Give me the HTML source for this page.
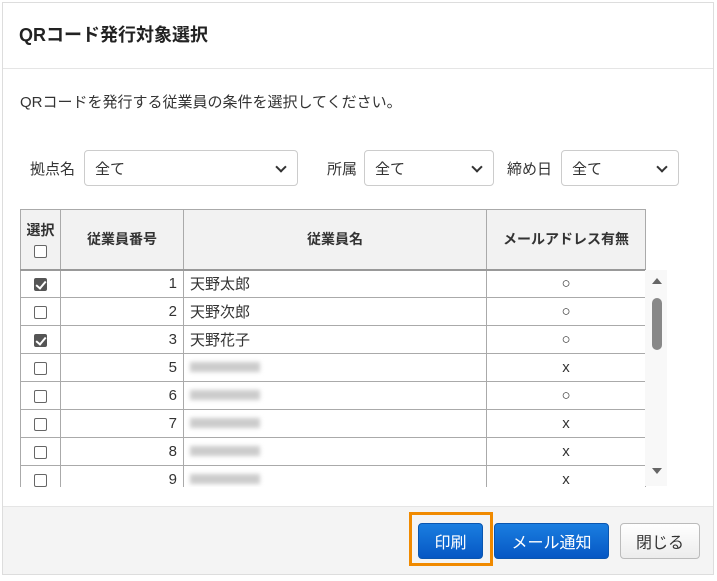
<!DOCTYPE html>
<html><head><meta charset="utf-8"><style>
*{box-sizing:border-box;margin:0;padding:0}
body{width:717px;height:581px;background:#fff;font-family:"Liberation Sans","Noto Sans CJK JP",sans-serif;color:#333;position:relative;overflow:hidden}
.frame{position:absolute;left:2px;top:2px;width:712px;height:573px;border:1px solid #ddd}
.title{position:absolute;left:19px;top:21px;font-size:18px;font-weight:bold;color:#222}
.sep{position:absolute;left:3px;top:68px;width:710px;height:1px;background:#e5e5e5}
.desc{position:absolute;left:20px;top:91px;font-size:15px}
.lbl{position:absolute;top:158px;font-size:15px}
.sel{position:absolute;top:150px;height:36px;border:1px solid #ccc;border-radius:4px;font-size:15px;padding:7px 10px}
.sel:after{content:"";position:absolute;right:12px;top:12px;width:6px;height:6px;border-right:2px solid #333;border-bottom:2px solid #333;transform:rotate(45deg)}
table{position:absolute;left:20px;top:209px;border-collapse:collapse;font-size:15px}
td,th{border:1px solid #aaa;height:28px;padding:0 6px}
th{background:#f2f2f2;height:60px;font-size:14px;font-weight:bold;border-bottom:2px solid #999}
.cb{width:13px;height:13px;border:1px solid #666;border-radius:2px;display:inline-block;vertical-align:middle;background:#fff}
.ck{background:#555;border-color:#555;position:relative}
.ck:after{content:"";position:absolute;left:3px;top:0px;width:4px;height:8px;border-right:2px solid #fff;border-bottom:2px solid #fff;transform:rotate(40deg)}
.blur{display:inline-block;width:70px;height:10px;background:#ccc;filter:blur(2px)}
.clip{position:absolute;left:0;top:0;width:717px;height:487px;overflow:hidden}
.footer{position:absolute;left:3px;top:506px;width:710px;height:68px;background:#f4f4f4;border-top:1px solid #e5e5e5}
.btn{position:absolute;top:523px;height:36px;border-radius:4px;font-size:16px;display:flex;align-items:center;justify-content:center}
.blue{background:linear-gradient(#1a7ee0,#0657c4);color:#fff;border:1px solid #0a56b0}
</style></head><body>
<div class="frame"></div>
<div class="title">QRコード発行対象選択</div>
<div class="sep"></div>
<div class="desc">QRコードを発行する従業員の条件を選択してください。</div>
<div class="lbl" style="left:30px">拠点名</div>
<div class="sel" style="left:84px;width:214px">全て</div>
<div class="lbl" style="left:327px">所属</div>
<div class="sel" style="left:364px;width:130px">全て</div>
<div class="lbl" style="left:507px">締め日</div>
<div class="sel" style="left:561px;width:118px">全て</div>
<div class="clip">
<table>
<tr><th style="width:40px;padding:0">選択<br><span class="cb" style="margin-top:4px"></span></th><th style="width:123px">従業員番号</th><th style="width:303px">従業員名</th><th style="width:159px">メールアドレス有無</th></tr>
<tr><td align=center><span class="cb ck"></span></td><td align=right>1</td><td>天野太郎</td><td align=center>○</td></tr>
<tr><td align=center><span class="cb"></span></td><td align=right>2</td><td>天野次郎</td><td align=center>○</td></tr>
<tr><td align=center><span class="cb ck"></span></td><td align=right>3</td><td>天野花子</td><td align=center>○</td></tr>
<tr><td align=center><span class="cb"></span></td><td align=right>5</td><td><span class="blur"></span></td><td align=center>x</td></tr>
<tr><td align=center><span class="cb"></span></td><td align=right>6</td><td><span class="blur"></span></td><td align=center>○</td></tr>
<tr><td align=center><span class="cb"></span></td><td align=right>7</td><td><span class="blur"></span></td><td align=center>x</td></tr>
<tr><td align=center><span class="cb"></span></td><td align=right>8</td><td><span class="blur"></span></td><td align=center>x</td></tr>
<tr><td align=center><span class="cb"></span></td><td align=right>9</td><td><span class="blur"></span></td><td align=center>x</td></tr>
</table>
</div>
<div style="position:absolute;left:645px;top:270px;width:22px;height:216px;background:#f8f8f8"></div>
<div style="position:absolute;left:652px;top:278px;border:5px solid transparent;border-bottom:6px solid #666;border-top:0"></div>
<div style="position:absolute;left:652px;top:298px;width:10px;height:52px;background:#888;border-radius:5px"></div>
<div style="position:absolute;left:652px;top:468px;border:5px solid transparent;border-top:6px solid #666;border-bottom:0"></div>
<div class="footer"></div>
<div style="position:absolute;left:409px;top:512px;width:84px;height:54px;border:3px solid #f08a00"></div>
<div class="btn blue" style="left:418px;width:65px">印刷</div>
<div class="btn blue" style="left:494px;width:115px">メール通知</div>
<div class="btn" style="left:620px;width:80px;background:linear-gradient(#fff,#ececec);border:1px solid #bbb;color:#333">閉じる</div>
</body></html>
